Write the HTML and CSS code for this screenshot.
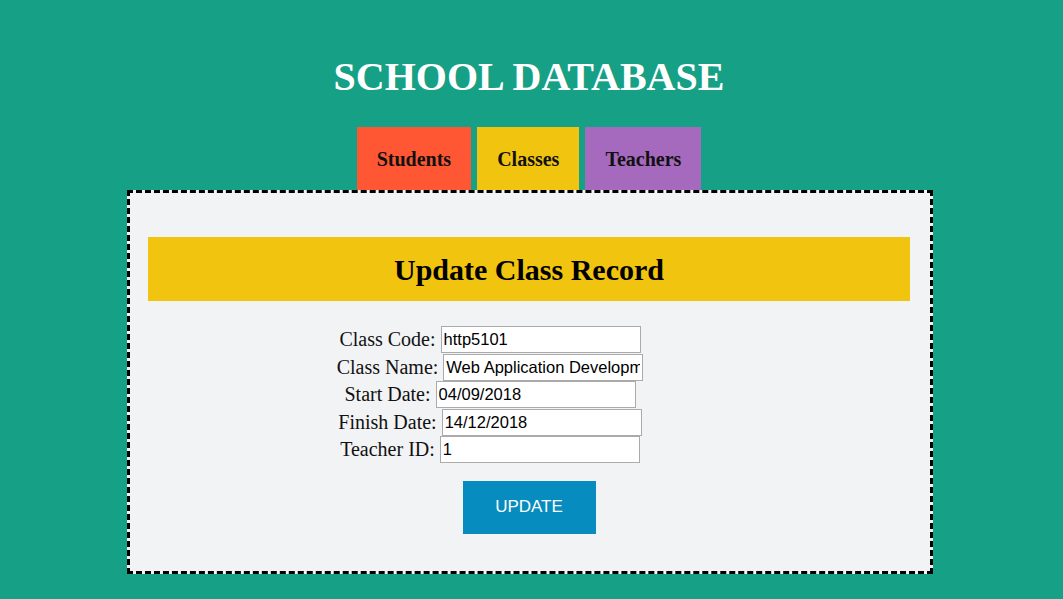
FILE: index.html
```html
<!DOCTYPE html>
<html>
<head>
<meta charset="utf-8">
<link rel="stylesheet" href="styles.css">
</head>
<body>
<header class="header">
  <h1 class="title">SCHOOL DATABASE</h1>
  <nav class="nav">
    <a class="tab tab-students" href="#">Students</a>
    <a class="tab tab-classes" href="#">Classes</a>
    <a class="tab tab-teachers" href="#">Teachers</a>
  </nav>
</header>
<main class="panel">
  <h2 class="panel-title">Update Class Record</h2>
  <form class="form">
    <div class="row"><label class="label">Class Code:</label> <input class="field" type="text" value="http5101"></div>
    <div class="row"><label class="label">Class Name:</label> <input class="field" type="text" value="Web Application Development"></div>
    <div class="row"><label class="label">Start Date:</label> <input class="field" type="text" value="04/09/2018"></div>
    <div class="row"><label class="label">Finish Date:</label> <input class="field" type="text" value="14/12/2018"></div>
    <div class="row"><label class="label">Teacher ID:</label> <input class="field" type="text" value="1"></div>
    <div class="actions"><button class="btn" type="button">UPDATE</button></div>
  </form>
</main>
</body>
</html>
```
FILE: styles.css
```css
html, body {
  margin: 0;
  padding: 0;
}
body {
  background: #16a085;
  font-family: "Liberation Serif", "Times New Roman", serif;
  min-height: 599px;
}
.header {
  text-align: center;
  padding: 55px 5px 0 0;
}
.title {
  margin: 0;
  font-size: 40px;
  line-height: 44px;
  color: #fff;
  font-weight: bold;
}
.nav {
  margin-top: 28px;
  font-size: 0;
  display: flex;
  justify-content: center;
  gap: 6px;
}
.tab {
  display: block;
  padding: 0 20px;
  height: 63px;
  line-height: 64px;
  font-size: 20px;
  font-weight: bold;
  color: #111;
  text-decoration: none;
}
.tab-students { background: #ff5733; }
.tab-classes { background: #f1c40f; }
.tab-teachers { background: #a569bd; }
.panel {
  box-sizing: border-box;
  width: 806px;
  margin: 0 0 0 127px;
  height: 384px;
  background: #f2f3f5;
  border: 3px dashed #000;
  padding: 44px 20px 0 18px;
}
.panel-title {
  margin: 0;
  background: #f1c40f;
  height: 64px;
  line-height: 66px;
  text-align: center;
  font-size: 30px;
  font-weight: bold;
  color: #000;
}
.form {
  margin-top: 25px;
}
.row {
  text-align: center;
  font-size: 20px;
  height: 27.5px;
  line-height: 27px;
  color: #111;
  padding-right: 78px;
}
.field {
  box-sizing: border-box;
  width: 200px;
  height: 27px;
  font-family: Arial, "Liberation Sans", sans-serif;
  font-size: 16.5px;
  border: 1px solid #aaa;
  padding: 1px 2px;
  vertical-align: top;
  background: #fff;
  color: #000;
}
.actions {
  text-align: center;
  margin-top: 17px;
}
.btn {
  width: 133px;
  height: 53px;
  background: #068cbe;
  color: #fff;
  border: none;
  font-family: Arial, "Liberation Sans", sans-serif;
  font-size: 17px;
}
```
